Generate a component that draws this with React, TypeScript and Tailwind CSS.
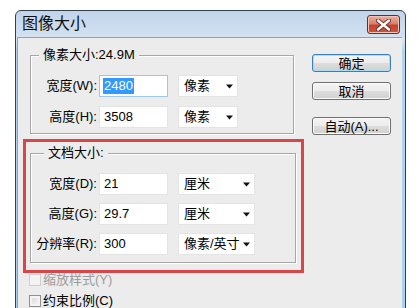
import React from "react";

interface RowProps {
  label: string;
  value: string;
  unit: string;
  unitW: string;
  focused?: boolean;
}

function Row({ label, value, unit, unitW, focused }: RowProps) {
  return (
    <div className="flex h-[22px] items-center">
      <div className="w-[66px] text-right leading-[16px]">{label}</div>
      <div
        className={`ml-[2px] flex h-[22px] w-[69px] items-center border bg-white pl-[3px] ${
          focused ? "border-[#9cc6ec]" : "border-[#e4e4e4]"
        }`}
      >
        {focused ? (
          <span className="bg-[#3399ff] px-[1px] leading-[16px] text-white">{value}</span>
        ) : (
          <span className="pl-[1px] leading-[16px]">{value}</span>
        )}
      </div>
      <div
        className={`ml-[10px] flex h-[22px] items-center justify-between border border-[#e4e4e4] bg-white pl-[5px] pr-[3px] ${unitW}`}
      >
        <span className="leading-[16px]">{unit}</span>
        <svg width="8" height="5" viewBox="0 0 8 5">
          <path d="M0 0.5 L7 0.5 L3.5 4.5 Z" fill="#111" />
        </svg>
      </div>
    </div>
  );
}

function Btn({ children, primary }: { children: React.ReactNode; primary?: boolean }) {
  return (
    <div
      className={`flex h-[18px] w-[79px] items-center justify-center rounded-[3px] border bg-[linear-gradient(#f4f4f4_0%,#ececec_50%,#dedede_50%,#d0d0d0_100%)] leading-none ${
        primary
          ? "border-[#3b7fb4] shadow-[inset_0_0_0_1px_#a9def5]"
          : "border-[#707070] shadow-[inset_0_0_0_1px_#fbfbfb]"
      }`}
    >
      {children}
    </div>
  );
}

function Check({ label, disabled }: { label: string; disabled?: boolean }) {
  return (
    <div className="flex h-[13px] items-center">
      <div
        className={`h-[12px] w-[12px] border ${
          disabled
            ? "border-[#cfcfcf] bg-[#f3f3f3]"
            : "border-[#8e8f8f] bg-[linear-gradient(135deg,#d8d8d8,#f7f7f7)] shadow-[inset_0_0_0_2px_#f4f4f4]"
        }`}
      />
      <span className={`ml-[2px] leading-[16px] ${disabled ? "text-[#9c9c9c]" : "text-black"}`}>{label}</span>
    </div>
  );
}

export default function App() {
  return (
    <div className="relative h-[308px] w-[420px] overflow-hidden bg-white pl-[15px] pt-[10px] font-['Liberation_Sans','Noto_Sans_CJK_SC',sans-serif] text-[13px] text-black">
      <div className="h-[320px] w-[391px] rounded-t-[6px] border border-[#33404e] bg-[linear-gradient(#c1d4ea,#d6e4f2_30px,#b5d3ee_40px,#acd0ec)]">
        {/* title bar */}
        <div className="flex h-[26px] items-center justify-between pl-[6px] pr-[5px]">
          <span className="text-[16px] leading-[20px] text-[#111]">图像大小</span>
          <div className="mt-[4px] flex h-[19px] w-[33px] items-center justify-center self-start rounded-[3px] border border-[#6e2b22] bg-[linear-gradient(#eab0a3_0%,#d8806c_45%,#c4442c_55%,#c9553a_100%)] shadow-[inset_0_0_0_1px_#f3c5b9]">
            <svg width="15" height="12" viewBox="0 0 15 12">
              <path
                d="M2 1.5 L13 10.5 M13 1.5 L2 10.5"
                stroke="#6a2a22"
                strokeWidth="4.2"
                strokeLinecap="round"
              />
              <path
                d="M2 1.5 L13 10.5 M13 1.5 L2 10.5"
                stroke="#fff"
                strokeWidth="2.4"
                strokeLinecap="round"
              />
            </svg>
          </div>
        </div>

        {/* body */}
        <div className="ml-[1px] mr-[3px] flex h-[300px] border-l border-t border-[#8ea3b8] bg-[#ececec]">
          <div className="flex w-[287px] flex-col">
            <div className="relative ml-[12px] mt-[17px] h-[79px] w-[264px] border border-[#a7a7a7] pt-[19px] shadow-[inset_1px_1px_0_#fff,1px_1px_0_#fff]">
              <span className="absolute -top-[9px] left-[8px] bg-[#ececec] px-[4px] leading-[16px]">像素大小:24.9M</span>
              <div className="flex flex-col gap-[9px]">
                <Row label="宽度(W):" value="2480" unit="像素" unitW="w-[60px]" focused />
                <Row label="高度(H):" value="3508" unit="像素" unitW="w-[60px]" />
              </div>
            </div>

            <div className="ml-[5px] mt-[5px] h-[134px] w-[281px] border-[3px] border-[#d8464a] pl-[4px] pt-[11px]">
              <div className="relative h-[110px] w-[266px] border border-[#a7a7a7] pt-[19px] shadow-[inset_1px_1px_0_#fff,1px_1px_0_#fff]">
                <span className="absolute -top-[9px] left-[13px] bg-[#ececec] px-[4px] leading-[16px]">文档大小:</span>
                <div className="flex flex-col gap-[8px]">
                  <Row label="宽度(D):" value="21" unit="厘米" unitW="w-[77px]" />
                  <Row label="高度(G):" value="29.7" unit="厘米" unitW="w-[77px]" />
                  <Row label="分辨率(R):" value="300" unit="像素/英寸" unitW="w-[77px]" />
                </div>
              </div>
            </div>

            <div className="ml-[11px] flex flex-col gap-[8px]">
              <Check label="缩放样式(Y)" disabled />
              <Check label="约束比例(C)" />
            </div>
          </div>

          <div className="ml-[7px] flex flex-col pt-[16px]">
            <Btn primary>确定</Btn>
            <div className="mt-[10px]">
              <Btn>取消</Btn>
            </div>
            <div className="mt-[17px]">
              <Btn>自动(A)...</Btn>
            </div>
          </div>
        </div>
      </div>
    </div>
  );
}
